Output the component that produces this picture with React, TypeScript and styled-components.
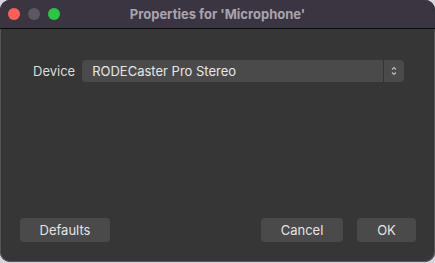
import styled, { createGlobalStyle } from 'styled-components';

const GlobalStyle = createGlobalStyle`
    html, body {
        margin: 0;
        padding: 0;
        background: #d8d6dc;
    }
    body {
        font-family: 'Inter', 'Liberation Sans', sans-serif;
        -webkit-font-smoothing: antialiased;
    }
`;

const Window = styled.div`
    width: 435px;
    height: 262px;
    box-sizing: border-box;
    border-radius: 10px;
    overflow: hidden;
    background: #363636;
    display: flex;
    flex-direction: column;
    box-shadow: inset 0 0 0 1px #555;
`;

const TitleBar = styled.div`
    height: 28px;
    flex: none;
    background: #3a3540;
    border-bottom: 1px solid #0c0c0c;
    display: flex;
    align-items: center;
    position: relative;
    padding-left: 8px;
    gap: 8px;
`;

const Light = styled.span<{ $color: string }>`
    width: 12px;
    height: 12px;
    border-radius: 50%;
    background: ${({ $color }) => $color};
`;

const Title = styled.div`
    position: absolute;
    left: 0;
    right: 0;
    top: 0;
    bottom: 0;
    display: flex;
    align-items: center;
    justify-content: center;
    color: #a9a4ae;
    font-size: 13px;
    font-weight: 700;
    pointer-events: none;
`;

const Body = styled.div`
    flex: 1;
    display: flex;
    flex-direction: column;
    padding: 31px 19px 20px 20px;
`;

const FieldRow = styled.div`
    display: flex;
    align-items: center;
    gap: 7px;
    padding-left: 13px;
`;

const Label = styled.span`
    color: #dcdcdc;
    font-size: 13px;
`;

const Select = styled.div`
    flex: 1;
    height: 22px;
    background: #4a4a4a;
    border-radius: 4px;
    display: flex;
    align-items: stretch;
    margin-right: 12px;
`;

const SelectValue = styled.span`
    flex: 1;
    display: flex;
    align-items: center;
    padding-left: 10px;
    color: #e6e6e6;
    font-size: 13px;
`;

const SelectArrows = styled.span`
    width: 20px;
    border-left: 1px solid #333;
    display: flex;
    align-items: center;
    justify-content: center;
`;

const Footer = styled.div`
    margin-top: auto;
    display: flex;
    align-items: center;
`;

const Button = styled.button<{ $width: number }>`
    width: ${({ $width }) => $width}px;
    height: 24px;
    border: none;
    border-radius: 4px;
    background: #4a4a4a;
    color: #e4e4e4;
    font-family: inherit;
    font-size: 13px;
    padding: 0;
`;

const Spacer = styled.div`
    flex: 1;
`;

const ButtonGroup = styled.div`
    display: flex;
    gap: 14px;
`;

export default function App() {
    return (
        <>
            <GlobalStyle />
            <Window>
                <TitleBar>
                    <Light $color="#fe5f57" />
                    <Light $color="#5b5860" />
                    <Light $color="#2ac840" />
                    <Title>Properties for 'Microphone'</Title>
                </TitleBar>
                <Body>
                    <FieldRow>
                        <Label>Device</Label>
                        <Select>
                            <SelectValue>RODECaster Pro Stereo</SelectValue>
                            <SelectArrows>
                                <svg width="8" height="12" viewBox="0 0 8 12" fill="none" stroke="#bdbdbd" strokeWidth="1.1">
                                    <path d="M2 4.5 L4 2.5 L6 4.5" />
                                    <path d="M2 7.5 L4 9.5 L6 7.5" />
                                </svg>
                            </SelectArrows>
                        </Select>
                    </FieldRow>
                    <Footer>
                        <Button $width={90}>Defaults</Button>
                        <Spacer />
                        <ButtonGroup>
                            <Button $width={82}>Cancel</Button>
                            <Button $width={59}>OK</Button>
                        </ButtonGroup>
                    </Footer>
                </Body>
            </Window>
        </>
    );
}
